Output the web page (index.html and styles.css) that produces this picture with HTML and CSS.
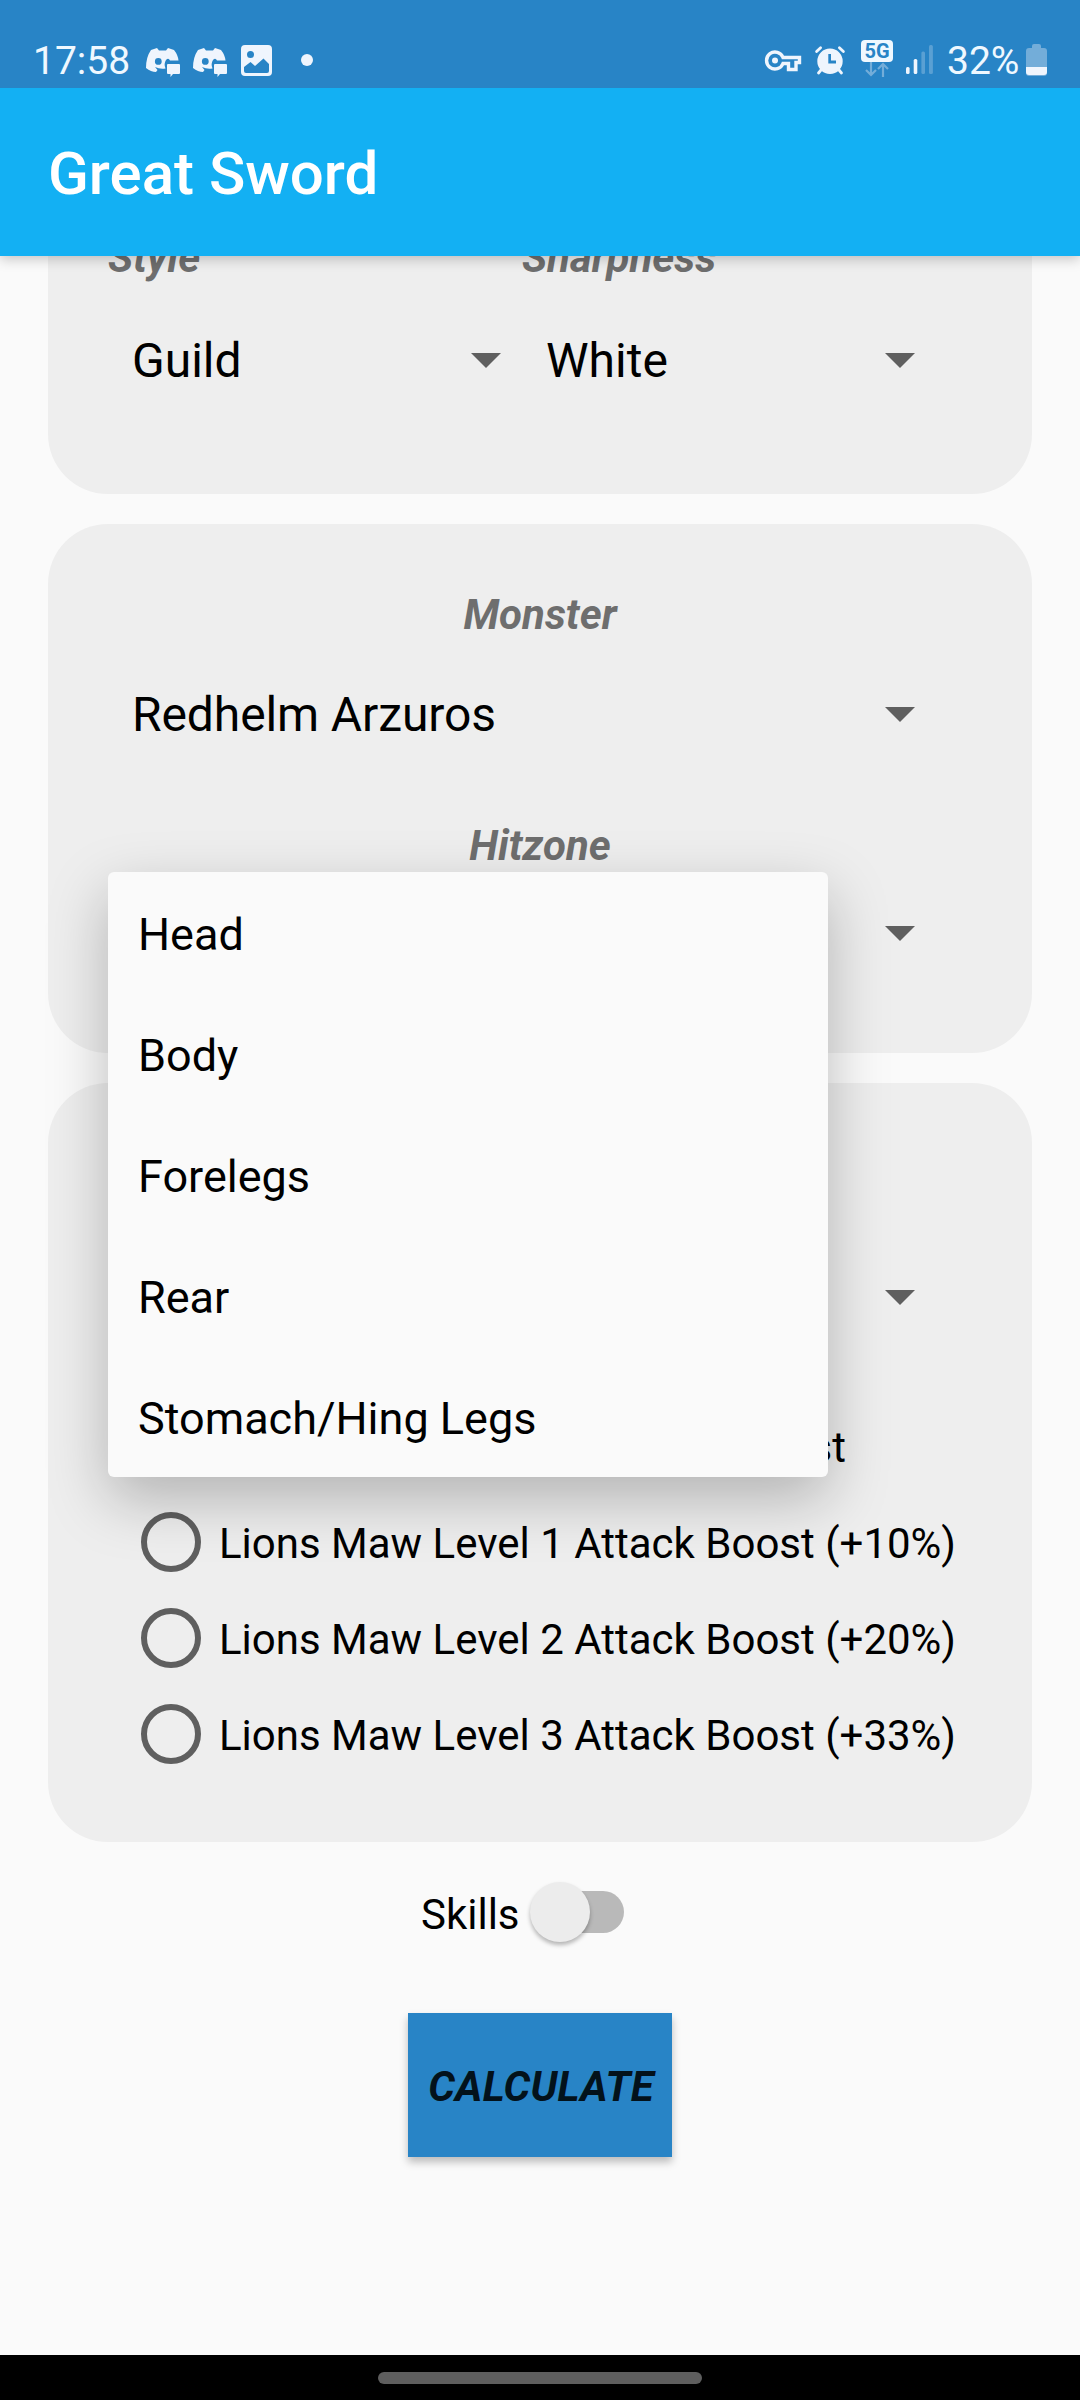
FILE: index.html
```html
<!DOCTYPE html>
<html lang="en">
<head>
<meta charset="utf-8">
<title>Great Sword</title>
<link rel="stylesheet" href="styles.css">
</head>
<body>
<div class="screen">
  <div class="status">
    <span class="clock">17:58</span>
    <svg class="discord" width="36" height="32" viewBox="0 0 36 32"><path fill-rule="evenodd" d="M6 4L12 2L14 4.500H21L23 2L29 4Q33 9 33.500 14.500H25Q23.500 11.500 21 14Q18.500 18 20.500 22.500Q15 23.500 10 21L12.500 24L11 26Q6 26 1 22Q1 11 6 4ZM13.300 12A3.400 3.400 0 1 0 13.300 18.800A3.400 3.400 0 1 0 13.300 12Z"/><path d="M23 18H34Q35 18 35 19V27Q35 28 34 28H28L25.500 31V28H23Q22 28 22 27V19Q22 18 23 18Z"/></svg>
    <svg class="discord second" width="36" height="32" viewBox="0 0 36 32"><path fill-rule="evenodd" d="M6 4L12 2L14 4.500H21L23 2L29 4Q33 9 33.500 14.500H25Q23.500 11.500 21 14Q18.500 18 20.500 22.500Q15 23.500 10 21L12.500 24L11 26Q6 26 1 22Q1 11 6 4ZM13.300 12A3.400 3.400 0 1 0 13.300 18.800A3.400 3.400 0 1 0 13.300 12Z"/><path d="M23 18H34Q35 18 35 19V27Q35 28 34 28H28L25.500 31V28H23Q22 28 22 27V19Q22 18 23 18Z"/></svg>
    <svg class="image" width="31" height="31" viewBox="0 0 31 31"><path fill-rule="evenodd" d="M4 0H27Q31 0 31 4V27Q31 31 27 31H4Q0 31 0 27V4Q0 0 4 0ZM9.500 6A3.500 3.500 0 1 0 9.500 13A3.500 3.500 0 1 0 9.500 6ZM3 22V26Q3 28 5 28H26Q28 28 28 26V19L22.500 13.500L14 21L9.500 17Z"/></svg>
    <span class="dot"></span>
    <span class="spacer"></span>
    <svg class="key" width="38" height="22" viewBox="0 0 38 22"><path d="M19 7.500H35.500V12.500H32V19.500H24.500V13.500H19A8.500 8.500 0 1 1 19 7.500Z" fill="none" stroke="#eff5fd" stroke-width="3.400"/><circle cx="11" cy="10.500" r="3"/></svg>
    <svg class="alarm" width="30" height="29" viewBox="0 0 30 29"><path fill-rule="evenodd" d="M15 2.500A12.700 12.700 0 0 0 15 27.900A12.700 12.700 0 0 0 15 2.500ZM13.300 8H16V14.500H21V17.500H13.300Z"/><path d="M1.600 5.600L5.600 1.700M24.400 1.700L28.400 5.600M6 24L3.500 27M24 24L26.500 27" stroke="#eff5fd" stroke-width="2.800" stroke-linecap="round"/></svg>
    <div class="network"><span class="badge">5G</span><svg class="arrows" width="24" height="15" viewBox="0 0 24 15"><path d="M6 0V13M1 8L6 13L11 8M18 15V2M13 7L18 2L23 7"/></svg></div>
    <svg class="signal" width="27" height="29" viewBox="0 0 27 29"><rect y="22" width="3.600" height="7" rx="1.500"/><rect x="7.700" y="14" width="3.600" height="15" rx="1.500"/><g fill="#5aa0d3"><rect x="15.400" y="6.500" width="3.600" height="22.500" rx="1.500"/><rect x="23" width="3.900" height="29" rx="1.500"/></g></svg>
    <span class="percent">32%</span>
    <svg class="battery" width="21" height="32" viewBox="0 0 21 32"><path fill="#73add9" d="M6 4V2Q6 0 8 0H13Q15 0 15 2V4H18Q21 4 21 7V29Q21 32 18 32H3Q0 32 0 29V7Q0 4 3 4Z"/><path d="M0 23H21V28Q21 31 18 31H3Q0 31 0 28Z"/></svg>
  </div>
  <header class="appbar">Great Sword</header>
  <main class="content">
    <section class="card weapon">
      <div class="field">
        <div class="label">Style</div>
        <div class="spinner"><span>Guild</span><i class="arrow"></i></div>
      </div>
      <div class="field">
        <div class="label">Sharpness</div>
        <div class="spinner"><span>White</span><i class="arrow"></i></div>
      </div>
    </section>
    <section class="card target">
      <div class="label">Monster</div>
      <div class="spinner monster"><span>Redhelm Arzuros</span><i class="arrow"></i></div>
      <div class="label hitzone">Hitzone</div>
      <div class="anchor">
        <div class="spinner"><i class="arrow"></i></div>
        <div class="popup">
          <div class="option">Head</div>
          <div class="option">Body</div>
          <div class="option">Forelegs</div>
          <div class="option">Rear</div>
          <div class="option">Stomach/Hing Legs</div>
        </div>
      </div>
    </section>
    <section class="card boosts">
      <div class="spinner"><i class="arrow"></i></div>
      <div class="radios">
        <div class="radio"><i class="ring"></i><span class="none">Attack Boost</span></div>
        <div class="radio"><i class="ring"></i><span>Lions Maw Level 1 Attack Boost (+10%)</span></div>
        <div class="radio"><i class="ring"></i><span>Lions Maw Level 2 Attack Boost (+20%)</span></div>
        <div class="radio"><i class="ring"></i><span>Lions Maw Level 3 Attack Boost (+33%)</span></div>
      </div>
    </section>
    <div class="skills"><span>Skills</span><div class="switch"><i class="thumb"></i></div></div>
    <button class="calculate">CALCULATE</button>
  </main>
  <div class="navbar"><div class="pill"></div></div>
</div>
</body>
</html>
```
FILE: styles.css
```css
* { box-sizing: border-box; }
body { margin: 0; background: #fafafa; font-family: Roboto, sans-serif; color: #000; }
.screen { width: 1080px; height: 2400px; display: flex; flex-direction: column; overflow: hidden; }

.status { flex: none; position: relative; z-index: 3; height: 88px; padding: 0 33px 0 33px; display: flex; align-items: flex-start; background: #2884c6; color: #eff8ff; font-size: 39px; line-height: 46px; }
.status svg { fill: #eff5fd; flex: none; }
.clock { width: 112px; margin-top: 38px; }
.discord { margin-top: 46px; }
.second { margin-left: 11px; }
.image { margin: 45px 0 0 13px; }
.dot { width: 12px; height: 12px; margin: 54px 0 0 29px; border-radius: 50%; background: #eff5fd; }
.spacer { flex: 1; }
.key { margin: 50px 13px 0 0; }
.alarm { margin: 46px 16px 0 0; overflow: visible; }
.network { width: 32px; margin: 40px 13px 0 0; display: flex; flex-direction: column; align-items: center; }
.badge { width: 32px; height: 22px; border-radius: 4px; background: #eff8ff; color: #2884c6; font-size: 20px; line-height: 23px; font-weight: 700; text-align: center; }
.status .arrows { fill: none; stroke: #73add9; stroke-width: 2.2; }
.signal { margin: 45px 14px 0 0; }
.percent { width: 79px; margin-top: 38px; white-space: nowrap; }
.battery { margin-top: 44px; }

.appbar { flex: none; position: relative; z-index: 2; height: 168px; padding-left: 48px; background: #13b0f3; color: #fff; font-size: 60px; font-weight: 500; line-height: 172px; box-shadow: 0 3px 12px rgba(0, 0, 0, .22); }

.content { flex: 1; min-height: 0; padding: 0 48px; display: flex; flex-direction: column; }
.card { flex: none; background: #eee; border-radius: 60px; margin-bottom: 30px; }
.label { height: 56px; font-size: 42px; font-weight: 700; font-style: italic; line-height: 56px; color: #6e6e6e; text-align: center; }
.spinner { height: 71px; padding-left: 24px; display: flex; align-items: center; font-size: 48px; line-height: 71px; }
.arrow { width: 30px; height: 15px; margin-left: auto; background: #5f5f5f; clip-path: polygon(0 0, 100% 0, 50% 100%); }

.weapon { height: 238px; padding: 0 117px 0 60px; border-radius: 0 0 60px 60px; display: grid; grid-template-columns: 393px 414px; column-gap: 21px; }
.weapon .label { margin: -26px 0 39px; text-align: left; }
.weapon .field:last-child { width: 393px; }

.target { height: 529px; padding: 63px 60px 0; }
.target .spinner, .boosts .spinner { margin-right: 57px; }
.monster { margin: 36px 0 68px; letter-spacing: -.1px; }
.anchor { margin-top: 24px; position: relative; }
.popup { position: absolute; z-index: 1; left: 0; top: -26px; width: 720px; border-radius: 6px; background: #fafafa; box-shadow: 0 22px 60px rgba(0, 0, 0, .25); }
.option { height: 121px; padding-left: 30px; font-size: 45px; line-height: 125px; }

.boosts { height: 759px; padding: 179px 60px 60px; }
.radios { margin-top: 65px; }
.radio { height: 96px; padding-left: 33px; display: flex; align-items: center; font-size: 42px; line-height: 50px; white-space: nowrap; }
.radio span { padding-top: 3px; }
.radio .none { width: 627px; text-align: right; }
.ring { width: 60px; height: 60px; margin-right: 18px; border: 6px solid #5f5f5f; border-radius: 50%; }

.skills { display: flex; align-items: center; height: 96px; margin: -8px 0 0 373px; font-size: 42px; line-height: 50px; }
.skills span { padding-top: 5px; }
.switch { width: 85px; height: 42px; margin-left: 19px; border-radius: 21px; background: #b9b9b9; display: flex; align-items: center; }
.thumb { flex: none; width: 60px; height: 60px; margin-left: -9px; border-radius: 50%; background: #ececec; box-shadow: 0 3px 4px rgba(0, 0, 0, .28); }
.calculate { width: 264px; height: 144px; margin: 53px 0 0 360px; padding: 2px 0 0 2px; border: 0; background: #2884c6; color: #03121b; font: italic 700 42px Roboto, sans-serif; letter-spacing: .2px; box-shadow: 0 5px 8px rgba(0, 0, 0, .25); }

.navbar { flex: none; height: 45px; padding-top: 17px; background: #000; }
.pill { width: 324px; height: 12px; margin: 0 auto; border-radius: 6px; background: #5e5e5e; }
```
